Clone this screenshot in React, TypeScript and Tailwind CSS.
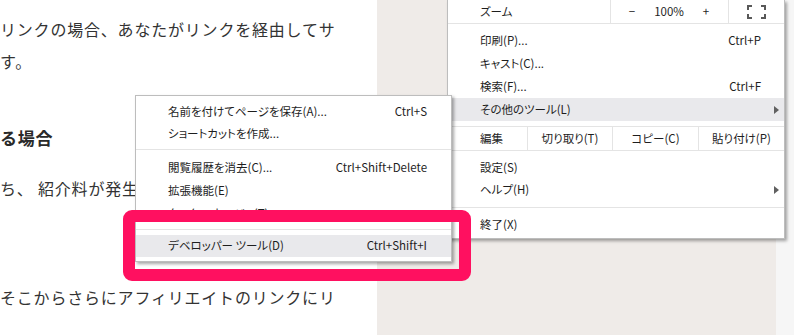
import React from "react";

const menuFont = "font-['Noto_Sans_CJK_JP','Noto_Sans',sans-serif] [font-feature-settings:'palt'] text-[11.5px] text-[#1e1e1e]";

function Row({
  label,
  shortcut,
  arrow,
  active,
  h = "h-[23px]",
  pr = "pr-[23px]",
}: {
  label: string;
  shortcut?: string;
  arrow?: boolean;
  active?: boolean;
  h?: string;
  pr?: string;
}) {
  return (
    <div className={`flex items-center pl-[32px] ${pr} ${h} ${active ? "bg-[#e9e9ec]" : ""}`}>
      <span className="flex-1 whitespace-nowrap">{label}</span>
      {shortcut && <span className="whitespace-nowrap">{shortcut}</span>}
      {arrow && (
        <span className="ml-auto -mr-[18px] w-0 h-0 border-y-[4px] border-y-transparent border-l-[5px] border-l-[#606060]" />
      )}
    </div>
  );
}

function Sep({ className }: { className: string }) {
  return <div className={`h-px bg-[#e4e4e4] ${className}`} />;
}

function FullscreenIcon() {
  return (
    <svg width="19" height="14" viewBox="0 0 19 14" fill="none" stroke="#595959" strokeWidth="2">
      <path d="M1 5V1h4M14 1h4v4M18 9v4h-4M5 13H1V9" />
    </svg>
  );
}

function MainMenu() {
  return (
    <div
      className={`absolute left-[447px] top-0 w-[338px] bg-white border-x border-b border-[#bdbdbd] shadow-[2px_2px_3px_rgba(0,0,0,0.35)] ${menuFont}`}
    >
      <div className="flex h-[24px] border-b border-[#e4e4e4]">
        <div className="w-[162px] pl-[32px] flex items-center">ズーム</div>
        <div className="w-[118px] border-l border-[#e4e4e4] flex items-center">
          <span className="w-[42px] text-center">−</span>
          <span className="w-[32px] text-center">100%</span>
          <span className="w-[42px] text-center">+</span>
        </div>
        <div className="flex-1 border-l border-[#e4e4e4] flex items-center justify-center">
          <FullscreenIcon />
        </div>
      </div>
      <div className="pt-[5px]">
        <Row label="印刷(P)..." shortcut="Ctrl+P" />
        <Row label="キャスト(C)..." />
        <Row label="検索(F)..." shortcut="Ctrl+F" />
        <Row label="その他のツール(L)" arrow active />
      </div>
      <div className="mt-[5px] flex h-[25px] border-y border-[#e4e4e4]">
        <div className="w-[79px] pl-[32px] flex items-center">編集</div>
        <div className="w-[85px] border-l border-[#e4e4e4] flex items-center justify-center">切り取り(T)</div>
        <div className="w-[86px] border-l border-[#e4e4e4] flex items-center justify-center">コピー(C)</div>
        <div className="flex-1 border-l border-[#e4e4e4] flex items-center justify-center">貼り付け(P)</div>
      </div>
      <div className="pt-[6px]">
        <Row label="設定(S)" h="h-[22px]" />
        <Row label="ヘルプ(H)" arrow h="h-[22px]" />
      </div>
      <Sep className="mt-[6px] mb-[6px]" />
      <Row label="終了(X)" h="h-[22px]" />
      <div className="h-[2px]" />
    </div>
  );
}

function SubMenu() {
  return (
    <div
      className={`absolute left-[135px] top-[95px] w-[317px] bg-white border border-[#bdbdbd] shadow-[2px_2px_3px_rgba(0,0,0,0.35)] pt-[5px] pb-[4px] ${menuFont}`}
    >
      <Row label="名前を付けてページを保存(A)..." shortcut="Ctrl+S" h="h-[22px]" pr="pr-[24px]" />
      <Row label="ショートカットを作成..." h="h-[22px]" pr="pr-[24px]" />
      <Sep className="mt-[4px] mb-[7px]" />
      <Row label="閲覧履歴を消去(C)..." shortcut="Ctrl+Shift+Delete" h="h-[22px]" pr="pr-[24px]" />
      <Row label="拡張機能(E)" h="h-[23px]" pr="pr-[24px]" />
      <Row label="タスク マネージャ(T)" h="h-[24px]" pr="pr-[24px]" />
      <Sep className="mt-[3px] mb-[5px]" />
      <Row label="デベロッパー ツール(D)" shortcut="Ctrl+Shift+I" h="h-[22px]" pr="pr-[24px]" active />
    </div>
  );
}

export default function App() {
  return (
    <div className="relative w-[794px] h-[335px] overflow-hidden flex font-['Noto_Sans_CJK_JP',sans-serif]">
      <div className="w-[377px] bg-white text-[#333] text-[16px] leading-[32px] tracking-[0.05em] pt-[13px] whitespace-nowrap">
        <p>リンクの場合、あなたがリンクを経由してサ</p>
        <p>す。</p>
        <h2 className="mt-[47px] text-[17px] leading-[28px] font-bold text-[#2a2a2a]">る場合</h2>
        <p className="mt-[20px]">ち、 紹介料が発生</p>
        <p className="mt-[77px]">そこからさらにアフィリエイトのリンクにリ</p>
      </div>
      <div className="w-[399px] bg-[#efebe8]" />
      <div className="flex-1 bg-[#f6f6f6]" />

      <MainMenu />
      <SubMenu />
      <div className="absolute left-[123px] top-[210px] w-[348px] h-[71px] border-[12px] border-[#ff1060] rounded-[9px]" />
    </div>
  );
}
